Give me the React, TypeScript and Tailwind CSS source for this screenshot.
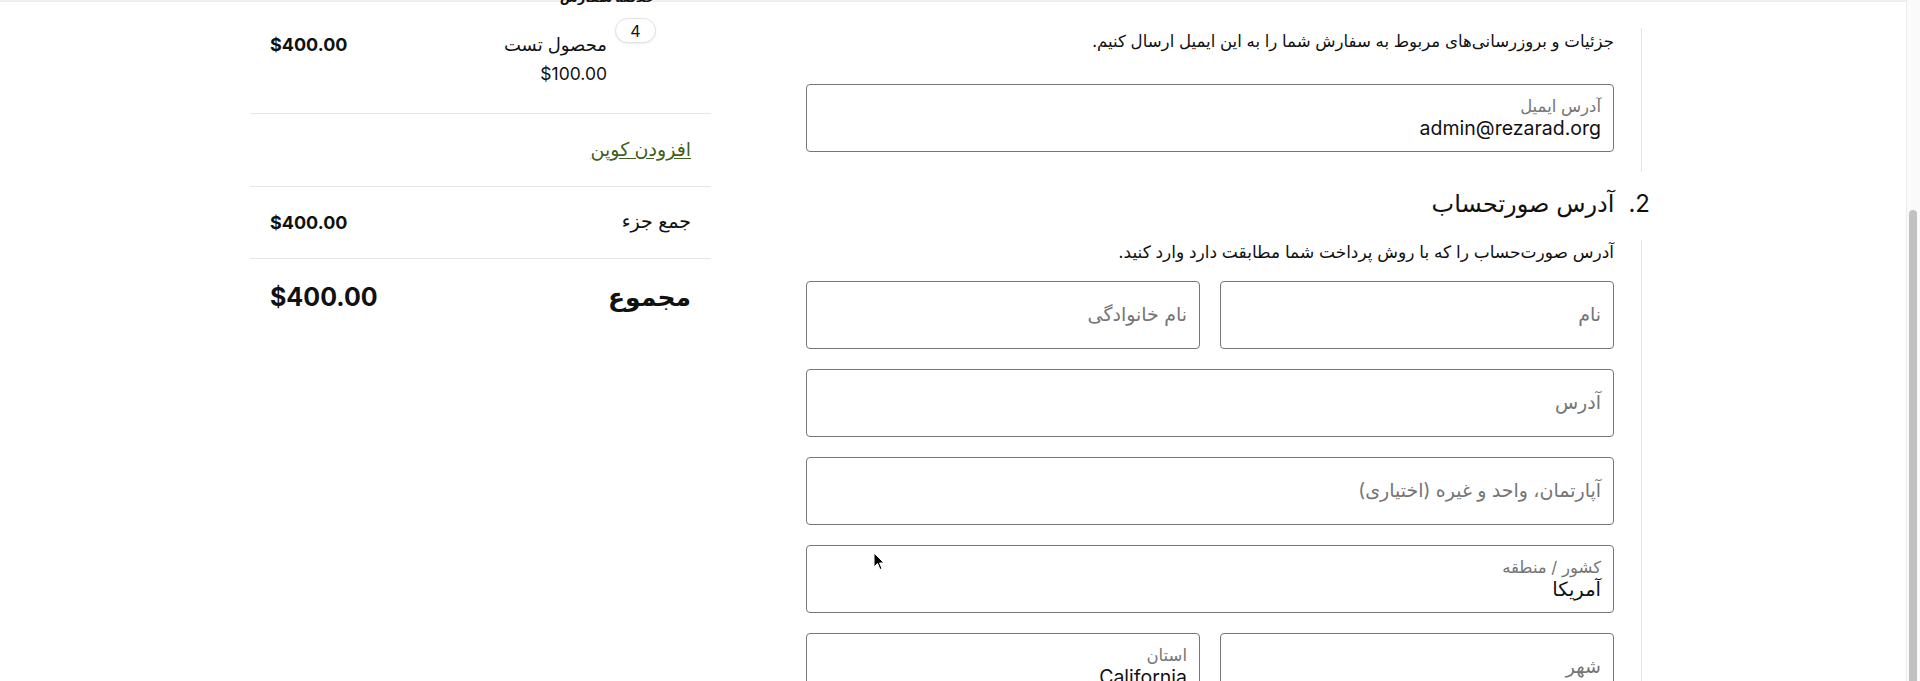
import React from 'react';

const Field: React.FC<{ label: string; value?: string }> = ({ label, value }) =>
  value ? (
    <div className="h-[68px] rounded border border-[#767676] px-3 pt-[12px]">
      <div className="text-[16.5px] leading-[19px] text-[#757575]">{label}</div>
      <div className="text-[19.5px] leading-[24px] text-[#111]">{value}</div>
    </div>
  ) : (
    <div className="flex h-[68px] items-center rounded border border-[#767676] px-3">
      <span className="text-[19px] text-[#757575]">{label}</span>
    </div>
  );

const SummaryRow: React.FC<{ className?: string; children: React.ReactNode }> = ({ className, children }) => (
  <div className={`flex items-center justify-between border-b border-[#e6e6e6] px-5 ${className ?? ''}`}>{children}</div>
);

const Cursor = () => (
  <svg className="absolute left-[873px] top-[552px]" width="12" height="19" viewBox="0 0 12 19">
    <path d="M1 1 L1 15 L4.5 11.5 L7 17.5 L9 16.6 L6.6 11 L11 11 Z" fill="#000" stroke="#fff" strokeWidth="1" />
  </svg>
);

export default function App() {
  return (
    <div className="flex h-[681px] overflow-hidden bg-white font-[Inter,'DejaVu_Sans',sans-serif] text-[#111] shadow-[inset_0_2px_0_0_#f3eeee]">
      <div className="relative flex-1 overflow-hidden">
        <div dir="rtl" className="flex gap-[95px] pl-[250px] pr-[256px]">
          {/* main checkout column */}
          <div className="w-[844px] shrink-0">
            <div className="mr-[8px] mt-[28px] border-r border-[#e4e4e4] pb-[20px] pr-[27px]">
              <p className="text-[16.6px] leading-[26px]">
                جزئیات و بروزرسانی‌های مربوط به سفارش شما را به این ایمیل ارسال کنیم.
              </p>
              <div className="mt-[30px]">
                <Field label="آدرس ایمیل" value="admin@rezarad.org" />
              </div>
            </div>

            <h2 className="mt-[16px] mb-[20px] flex gap-[14px] text-[24px] font-normal leading-[32px]">
              <span>2.</span>
              <span>آدرس صورتحساب</span>
            </h2>

            <div className="mr-[8px] border-r border-[#e4e4e4] pb-10 pr-[27px]">
              <p className="text-[17px] leading-[24px]">
                آدرس صورت‌حساب را که با روش پرداخت شما مطابقت دارد وارد کنید.
              </p>
              <div className="mt-[17px] flex flex-col gap-5">
                <div className="grid grid-cols-2 gap-5">
                  <Field label="نام" />
                  <Field label="نام خانوادگی" />
                </div>
                <Field label="آدرس" />
                <Field label="آپارتمان، واحد و غیره (اختیاری)" />
                <Field label="کشور / منطقه" value="آمریکا" />
                <div className="grid grid-cols-2 gap-5">
                  <Field label="شهر" />
                  <Field label="استان" value="California" />
                </div>
              </div>
            </div>
          </div>

          {/* order summary */}
          <aside className="w-[461px] shrink-0">
            <div className="-mt-[17px] h-[28px] pl-5 pr-[56px] text-[13px] font-bold leading-[28px]">خلاصه سفارش</div>

            <SummaryRow className="h-[103px] !items-start">
              <div className="flex">
                <div className="relative mt-[17px] h-12 w-12">
                  <span className="absolute -left-[28px] -top-[10px] flex h-[25px] w-[41px] items-center justify-center rounded-full border border-[#e2e2e2] bg-white text-[16px] shadow-[0_1px_2px_rgba(0,0,0,0.08)]">
                    4
                  </span>
                </div>
                <div className="mr-9 pt-[22px]">
                  <div className="text-[18px] leading-[24px]">محصول تست</div>
                  <div className="mt-[5px] text-[17.5px] leading-[24px]">$100.00</div>
                </div>
              </div>
              <div className="pt-[22px] text-[18px] font-bold leading-[24px]">$400.00</div>
            </SummaryRow>

            <SummaryRow className="h-[73px]">
              <a className="text-[19px] text-[#3f5f1a] underline underline-offset-2">افزودن کوپن</a>
            </SummaryRow>

            <SummaryRow className="h-[72px]">
              <span className="text-[19px]">جمع جزء</span>
              <span className="text-[18px] font-bold">$400.00</span>
            </SummaryRow>

            <div className="flex h-[78px] items-center justify-between px-5">
              <span className="text-[25px] font-bold">مجموع</span>
              <span className="text-[25px] font-bold">$400.00</span>
            </div>
          </aside>
        </div>
        <Cursor />
      </div>

      {/* scrollbar */}
      <div className="w-[14px] shrink-0 border-l border-[#ececec] bg-[#fafafa] pl-[2px] pt-[210px]">
        <div className="h-[500px] w-[8px] rounded-full bg-[#c1c1c1]" />
      </div>
    </div>
  );
}
